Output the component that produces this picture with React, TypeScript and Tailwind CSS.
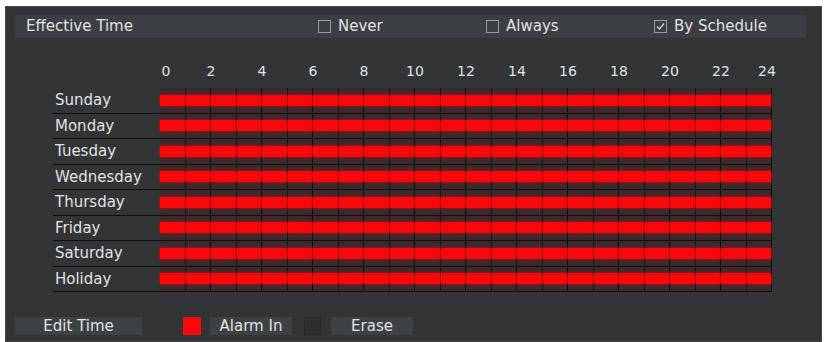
import React from 'react';

const days = ['Sunday', 'Monday', 'Tuesday', 'Wednesday', 'Thursday', 'Friday', 'Saturday', 'Holiday'];
const ticks = [0, 2, 4, 6, 8, 10, 12, 14, 16, 18, 20, 22, 24];
const HOUR = 25.5;

const Check = ({ label, checked }: { label: string; checked?: boolean }) => (
  <div className="flex w-[168px] shrink-0 items-center gap-[7px]">
    <span className="flex h-[13px] w-[13px] items-center justify-center border border-[#9a9ca0]">
      {checked ? (
        <svg width="11" height="11" viewBox="0 0 11 11">
          <path d="M2 5.5 L4.5 8 L9 2.5" fill="none" stroke="#d0d2d4" strokeWidth="1.3" />
        </svg>
      ) : null}
    </span>
    <span>{label}</span>
  </div>
);

const Track = () => (
  <div className="flex h-full w-[612px] bg-[#3a2a2e]">
    {Array.from({ length: 24 }).map((_, i) => (
      <div
        key={i}
        className={`flex h-full flex-1 items-center ${i % 2 === 0 ? 'border-r border-[#1c1516]' : 'border-r border-[#120c0d]'}`}
      >
        <div className="h-[11px] w-full bg-[#f80808] shadow-[0_0_3px_#e00000]" />
      </div>
    ))}
  </div>
);

export default function App() {
  return (
    <div
      className="h-[342px] w-[826px] bg-white pl-[5px] pr-[4px] pt-[6px] text-[#e2e2e2]"
      style={{ fontFamily: '"DejaVu Sans", Verdana, sans-serif' }}
    >
      <div className="h-full overflow-hidden border border-[#44474a] bg-[#323436] pl-[9px] pr-[15px] pt-[8px]">
        <div className="flex h-[23px] items-center overflow-hidden bg-[#3b3f44] text-[15px]">
          <div className="w-[303px] shrink-0 pl-[11px]">Effective Time</div>
          <Check label="Never" />
          <Check label="Always" />
          <Check label="By Schedule" checked />
        </div>

        <div className="relative mt-[23px] h-[20px] text-[14px]">
          {ticks.map((t) => {
            let x = 145 + t * HOUR;
            if (t === 0) x += 6;
            if (t === 24) x -= 5;
            return (
              <span
                key={t}
                className="absolute top-0 w-[20px] -translate-x-1/2 text-center leading-[20px]"
                style={{ left: x }}
              >
                {t}
              </span>
            );
          })}
        </div>

        <div className="ml-[38px] mt-[7px] flex w-fit flex-col">
          {days.map((d) => (
            <div key={d} className="flex h-[25.5px] border-b border-[#0e0e0f]">
              <div className="flex w-[107px] items-center pl-[2px] text-[15px]">{d}</div>
              <Track />
            </div>
          ))}
        </div>

        <div className="mt-[25px] flex h-[18px] items-center text-[15px]">
          <div className="flex h-full w-[127px] items-center justify-center bg-[#3e4144]">Edit Time</div>
          <div className="ml-[41px] h-[18px] w-[18px] bg-[#f80808]" />
          <div className="ml-[9px] flex h-full w-[82px] items-center justify-center bg-[#3e4144]">Alarm In</div>
          <div className="ml-[12px] h-[18px] w-[17px] border border-[#26282a] bg-[#2c2e30]" />
          <div className="ml-[10px] flex h-full w-[82px] items-center justify-center bg-[#3e4144]">Erase</div>
        </div>
      </div>
    </div>
  );
}
